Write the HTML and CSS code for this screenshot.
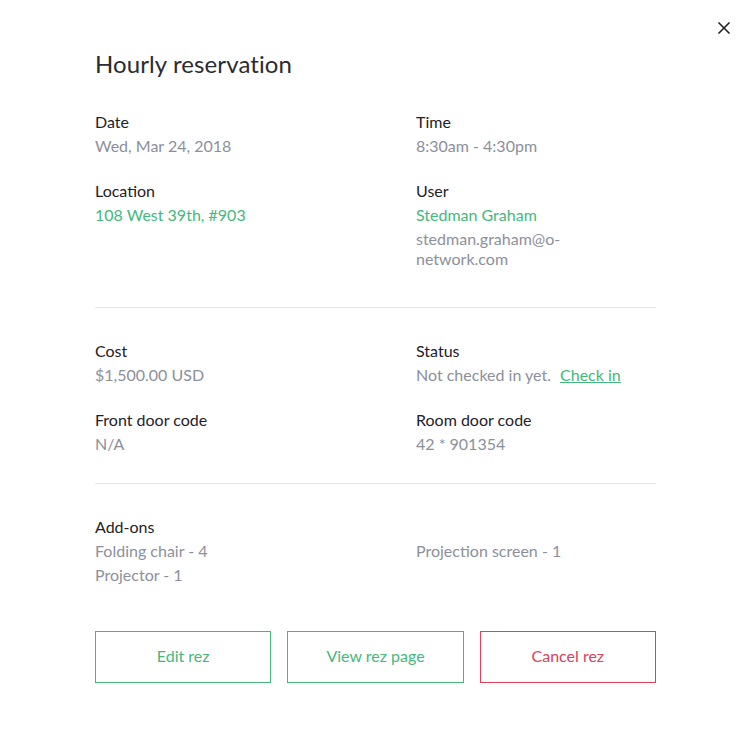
FILE: index.html
```html
<!DOCTYPE html>
<html>
<head>
<meta charset="utf-8">
<link rel="stylesheet" href="styles.css">
</head>
<body>
<div class="modal">
  <button class="close" aria-label="Close">
    <svg width="14" height="14" viewBox="0 0 14 14"><path d="M1.5 1.5L12.5 12.5M12.5 1.5L1.5 12.5" stroke="#222" stroke-width="1.6" fill="none"/></svg>
  </button>
  <div class="content">
    <h1 class="title">Hourly reservation</h1>
    <section class="section first">
      <div class="grid">
        <div class="item">
          <div class="label">Date</div>
          <div class="value">Wed, Mar 24, 2018</div>
        </div>
        <div class="item">
          <div class="label">Time</div>
          <div class="value">8:30am - 4:30pm</div>
        </div>
        <div class="item">
          <div class="label">Location</div>
          <div class="value green">108 West 39th, #903</div>
        </div>
        <div class="item">
          <div class="label">User</div>
          <div class="value green">Stedman Graham</div>
          <div class="value email">stedman.graham@o-network.com</div>
        </div>
      </div>
    </section>
    <section class="section second">
      <div class="grid">
        <div class="item">
          <div class="label">Cost</div>
          <div class="value">$1,500.00 USD</div>
        </div>
        <div class="item">
          <div class="label">Status</div>
          <div class="value">Not checked in yet. <a class="link" href="#">Check in</a></div>
        </div>
        <div class="item">
          <div class="label">Front door code</div>
          <div class="value">N/A</div>
        </div>
        <div class="item">
          <div class="label">Room door code</div>
          <div class="value">42 * 901354</div>
        </div>
      </div>
    </section>
    <section class="section third">
      <div class="label">Add-ons</div>
      <div class="grid addons">
        <div>
          <div class="value">Folding chair - 4</div>
          <div class="value">Projector - 1</div>
        </div>
        <div>
          <div class="value">Projection screen - 1</div>
        </div>
      </div>
    </section>
    <div class="actions">
      <button class="btn">Edit rez</button>
      <button class="btn">View rez page</button>
      <button class="btn danger">Cancel rez</button>
    </div>
  </div>
</div>
</body>
</html>
```

FILE: styles.css
```css
* { box-sizing: border-box; }
html, body { margin: 0; padding: 0; background: #fff; }
body {
  font-family: Lato, "Noto Sans", sans-serif;
  font-size: 16px;
  color: #1f2126;
  width: 752px;
  height: 740px;
  overflow: hidden;
}
.modal { position: relative; width: 752px; height: 740px; }
.close {
  position: absolute;
  top: 21px;
  right: 21px;
  width: 14px;
  height: 14px;
  padding: 0;
  border: 0;
  background: none;
  display: flex;
}
.content { padding: 0 96px 0 95px; }
.title {
  margin: 0;
  padding-top: 49px;
  font-size: 24px;
  font-weight: 400;
  line-height: 30px;
  color: #2a2c31;
  letter-spacing: 0.1px;
}
.section { border-bottom: 1px solid #e3e4e6; }
.section.first { padding-top: 31px; padding-bottom: 38px; }
.section.second { padding-top: 31px; padding-bottom: 27px; }
.section.third { border-bottom: 0; padding-top: 31px; }
.grid {
  display: grid;
  grid-template-columns: 321px 1fr;
  row-gap: 21px;
}
.label { line-height: 24px; color: #1f2126; }
.value { line-height: 24px; color: #8c909b; }
.value.green { color: #45b77d; }
.value.email { line-height: 20px; margin-top: 2px; max-width: 180px; }
.link { color: #45b77d; text-decoration: underline; margin-left: 5px; }
.addons { row-gap: 0; }
.actions {
  display: grid;
  grid-template-columns: repeat(3, 1fr);
  column-gap: 16px;
  margin-top: 44px;
}
.btn {
  height: 52px;
  background: #fff;
  border: 1px solid #45b77d;
  color: #45b77d;
  font-family: inherit;
  font-size: 16px;
  padding: 0 0 3px;
}
.btn.danger { border-color: #e0405a; color: #e0405a; }
```
